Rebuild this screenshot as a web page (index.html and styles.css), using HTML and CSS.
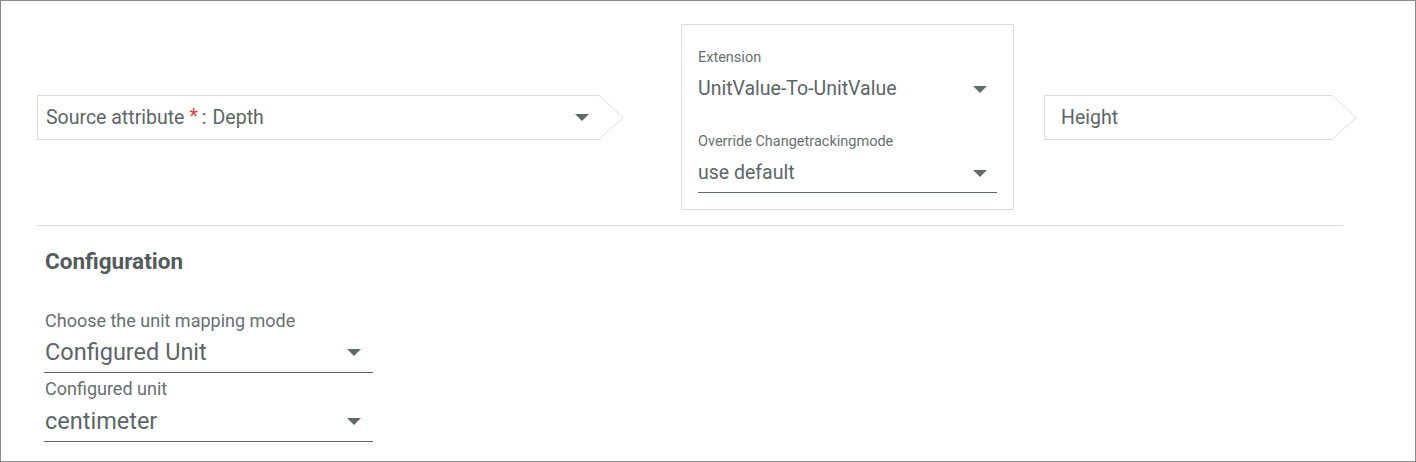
FILE: index.html
```html
<!DOCTYPE html>
<html>
<head>
<meta charset="utf-8">
<link rel="stylesheet" href="styles.css">
</head>
<body>
<div class="frame">
  <div class="top-row">
    <div class="chevron chevron-source">
      <div class="chevron-body">
        <span class="src-label">Source attribute</span><span class="req">*</span><span class="colon">:</span><span class="src-value">Depth</span>
        <span class="caret caret-src"></span>
      </div>
      <svg class="chevron-tip" width="25" height="45" viewBox="0 0 25 45"><polyline points="0,0.5 24,22.5 0,44.5" fill="none" stroke="#dcdcdc" stroke-width="1"/></svg>
    </div>

    <div class="card">
      <div class="field field-plain">
        <div class="f-label">Extension</div>
        <div class="f-value"><span>UnitValue-To-UnitValue</span><span class="caret"></span></div>
      </div>
      <div class="field">
        <div class="f-label">Override Changetrackingmode</div>
        <div class="f-value"><span>use default</span><span class="caret"></span></div>
      </div>
    </div>

    <div class="chevron chevron-target">
      <div class="chevron-body">
        <span class="tgt-value">Height</span>
      </div>
      <svg class="chevron-tip" width="25" height="45" viewBox="0 0 25 45"><polyline points="0,0.5 24,22.5 0,44.5" fill="none" stroke="#dcdcdc" stroke-width="1"/></svg>
    </div>
  </div>

  <div class="divider"></div>

  <div class="config">
    <h2 class="config-title">Configuration</h2>
    <div class="cfield">
      <div class="c-label">Choose the unit mapping mode</div>
      <div class="c-value"><span>Configured Unit</span><span class="caret"></span></div>
    </div>
    <div class="cfield cfield-2">
      <div class="c-label">Configured unit</div>
      <div class="c-value"><span>centimeter</span><span class="caret"></span></div>
    </div>
  </div>
</div>
</body>
</html>
```

FILE: styles.css
```css
* { box-sizing: border-box; }
html, body { margin: 0; padding: 0; background: #fff; }
body {
  font-family: Roboto, "Liberation Sans", sans-serif;
  color: #5c6666;
}
.frame {
  width: 1416px;
  height: 462px;
  border: 1px solid #8a8a8a;
  padding-left: 36px;
  overflow: hidden;
}
.top-row {
  display: flex;
  align-items: center;
  margin-top: 23px;
}
.chevron {
  display: flex;
  height: 45px;
}
.chevron-body {
  height: 45px;
  border: 1px solid #dcdcdc;
  border-right: none;
  display: flex;
  align-items: center;
  font-size: 19.5px;
}
.chevron-source .chevron-body {
  width: 562px;
  padding-left: 8px;
}
.chevron-tip { display: block; flex: none; }
.req { color: #e53935; margin-left: 5px; position: relative; top: -1px; }
.colon { margin-left: 4px; }
.src-value { margin-left: 6px; }
.caret {
  display: inline-block;
  flex: none;
  width: 0;
  height: 0;
  border-left: 7px solid transparent;
  border-right: 7px solid transparent;
  border-top: 7px solid #5f6b6b;
  margin-left: auto;
}
.caret-src { margin-right: 10px; }
.chevron-target { margin-left: 30px; }
.chevron-target .chevron-body {
  width: 288px;
  padding-left: 16px;
}
.card {
  margin-left: 57px;
  width: 333px;
  border: 1px solid #dcdcdc;
  padding: 23px 16px 16px 16px;
}
.field + .field { margin-top: 23px; }
.f-label {
  font-size: 14.5px;
  line-height: 20px;
  color: #666f70;
}
.f-value {
  display: flex;
  align-items: center;
  margin-top: 7px;
  font-size: 19.5px;
  line-height: 28px;
  padding-bottom: 5px;
  border-bottom: 1px solid #5f6b6b;
}
.f-value .caret { margin-right: 10px; }
.field-plain .f-value { border-bottom-color: transparent; }
.divider {
  width: 1306px;
  height: 1px;
  background: #dddddd;
  margin-top: 15px;
}
.config { padding-left: 7px; }
.config-title {
  margin: 23px 0 0 1px;
  font-size: 22.5px;
  line-height: 24px;
  font-weight: 700;
  color: #535c5c;
}
.cfield { width: 329px; margin-top: 38px; }
.cfield-2 { margin-top: 6px; }
.c-label {
  font-size: 18px;
  line-height: 20px;
  padding-left: 1px;
  color: #666f70;
}
.c-value {
  display: flex;
  align-items: center;
  margin-top: 7px;
  font-size: 23.5px;
  line-height: 28px;
  padding-left: 1px;
  padding-bottom: 6px;
  border-bottom: 1px solid #5f6b6b;
}
.cfield-2 .c-value { margin-top: 8px; }
.c-value .caret { margin-right: 12px; }
```
